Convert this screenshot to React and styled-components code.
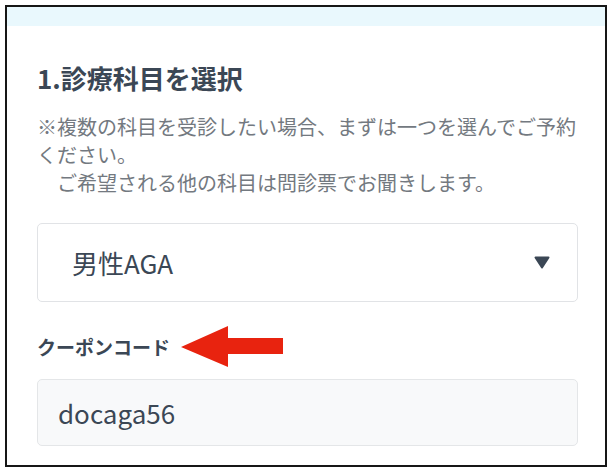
import React from "react";
import styled, { createGlobalStyle } from "styled-components";

const GlobalStyle = createGlobalStyle`
  html, body {
    margin: 0;
    padding: 0;
    background: #ffffff;
  }
  body {
    font-family: "Noto Sans CJK JP", "Noto Sans", sans-serif;
  }
`;

const Frame = styled.div`
  box-sizing: border-box;
  margin: 5px 0 0 5px;
  width: 602px;
  height: 462px;
  border: 2px solid #161616;
  background: #ffffff;
  overflow: hidden;
`;

const TopStrip = styled.div`
  height: 19px;
  background: #e9f8fd;
`;

const Body = styled.div`
  padding: 32px 27px 0 30px;
`;

const Title = styled.h2`
  margin: 0;
  font-size: 26px;
  font-weight: 700;
  line-height: 39px;
  color: #3b4755;
`;

const Note = styled.p`
  margin: 16px 0 0;
  font-size: 20px;
  line-height: 28px;
  color: #737980;
  white-space: pre-line;
`;

const Select = styled.div`
  box-sizing: border-box;
  margin-top: 26px;
  height: 79px;
  display: flex;
  align-items: center;
  justify-content: space-between;
  padding: 0 27px 0 34px;
  border: 1px solid #e1e3e6;
  border-radius: 5px;
  background: #ffffff;
  font-size: 26px;
  color: #3b4755;
`;

const Label = styled.div`
  margin-top: 24px;
  display: flex;
  align-items: center;
  gap: 11px;
  font-size: 19px;
  font-weight: 700;
  line-height: 28px;
  color: #3b4755;
`;

const Input = styled.div`
  box-sizing: border-box;
  margin-top: 12px;
  height: 67px;
  display: flex;
  align-items: center;
  padding: 0 20px;
  border: 1px solid #e4e6e8;
  border-radius: 5px;
  background: #f8f9fa;
  font-size: 26px;
  color: #3b4755;
`;

function Caret() {
  return (
    <svg width="16" height="13" viewBox="0 0 16 13">
      <path
        d="M1.5 1.5 L14.5 1.5 L8 11.5 Z"
        fill="#3b4755"
        stroke="#3b4755"
        strokeWidth="2"
        strokeLinejoin="round"
      />
    </svg>
  );
}

function Arrow() {
  return (
    <svg width="102" height="41" viewBox="0 0 102 41">
      <path d="M0 21 L47 0 L47 12 L102 12 L102 28 L47 28 L47 41 Z" fill="#e8230f" />
    </svg>
  );
}

export default function App() {
  return (
    <>
      <GlobalStyle />
      <Frame>
        <TopStrip />
        <Body>
          <Title>1.診療科目を選択</Title>
          <Note>
            {"※複数の科目を受診したい場合、まずは一つを選んでご予約ください。\n　ご希望される他の科目は問診票でお聞きします。"}
          </Note>
          <Select>
            <span>男性AGA</span>
            <Caret />
          </Select>
          <Label>
            <span>クーポンコード</span>
            <Arrow />
          </Label>
          <Input>docaga56</Input>
        </Body>
      </Frame>
    </>
  );
}
